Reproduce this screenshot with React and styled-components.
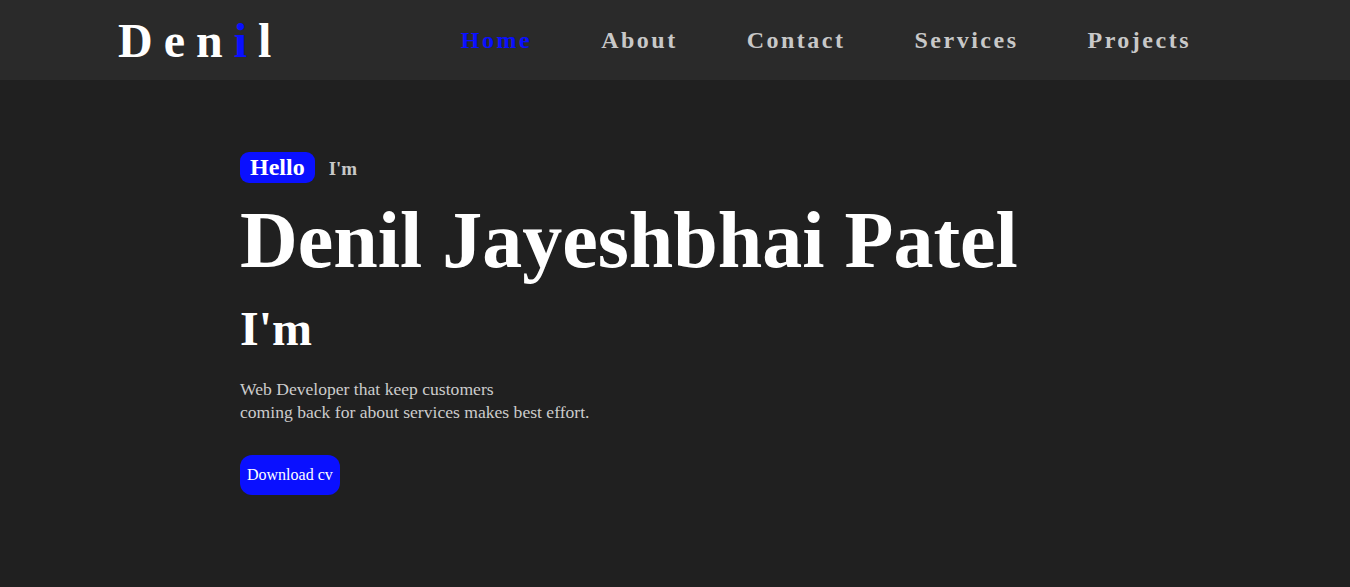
import React from "react";
import styled, { createGlobalStyle } from "styled-components";

const GlobalStyle = createGlobalStyle`
  html, body {
    margin: 0;
    padding: 0;
    background: #202020;
    font-family: "Liberation Serif", "Times New Roman", serif;
  }
`;

const links = ["Home", "About", "Contact", "Services", "Projects"];

const App = () => {
  return (
    <>
      <GlobalStyle />
      <Header>
        <Logo>
          Den<Accent>i</Accent>l
        </Logo>
        <Nav>
          {links.map((link, i) => (
            <NavLink key={link} href="#" $active={i === 0}>
              {link}
            </NavLink>
          ))}
        </Nav>
      </Header>
      <Hero>
        <Greeting>
          <Badge>Hello</Badge>
          <Small>I'm</Small>
        </Greeting>
        <Name>Denil Jayeshbhai Patel</Name>
        <Role>I'm</Role>
        <Text>
          Web Developer that keep customers
          <br />
          coming back for about services makes best effort.
        </Text>
        <Button type="button">Download cv</Button>
      </Hero>
    </>
  );
};

const Header = styled.header`
  height: 80px;
  background: #2a2a2a;
  display: flex;
  align-items: center;
  justify-content: space-between;
  padding: 0 159px 0 118px;
`;

const Logo = styled.h1`
  margin: 0;
  font-size: 48px;
  font-weight: bold;
  letter-spacing: 11px;
  color: #ffffff;
`;

const Accent = styled.span`
  color: #0a10ff;
`;

const Nav = styled.nav`
  display: flex;
  gap: 69px;
`;

const NavLink = styled.a`
  font-size: 24px;
  font-weight: bold;
  letter-spacing: 2.5px;
  text-decoration: none;
  color: ${(p) => (p.$active ? "#0a10ff" : "#c8c8c8")};
`;

const Hero = styled.section`
  padding: 72px 0 0 240px;
  min-height: 507px;
  box-sizing: border-box;
`;

const Greeting = styled.div`
  display: flex;
  align-items: center;
  gap: 14px;
`;

const Badge = styled.span`
  background: #0a10ff;
  color: #ffffff;
  font-size: 24px;
  font-weight: bold;
  padding: 2px 10px;
  border-radius: 9px;
`;

const Small = styled.span`
  color: #c8c8c8;
  font-size: 19px;
  font-weight: bold;
  margin-top: 3px;
`;

const Name = styled.h1`
  margin: 12px 0 0;
  font-size: 80px;
  font-weight: bold;
  color: #ffffff;
`;

const Role = styled.h2`
  margin: 15px 0 0;
  font-size: 48px;
  font-weight: bold;
  color: #ffffff;
`;

const Text = styled.p`
  margin: 22px 0 0;
  font-size: 17.6px;
  line-height: 22.7px;
  color: #cccccc;
`;

const Button = styled.button`
  margin-top: 32px;
  font-family: inherit;
  font-size: 16px;
  color: #ffffff;
  background: #0a10ff;
  border: none;
  border-radius: 12px;
  padding: 11px 7px;
  cursor: pointer;
`;

export default App;
